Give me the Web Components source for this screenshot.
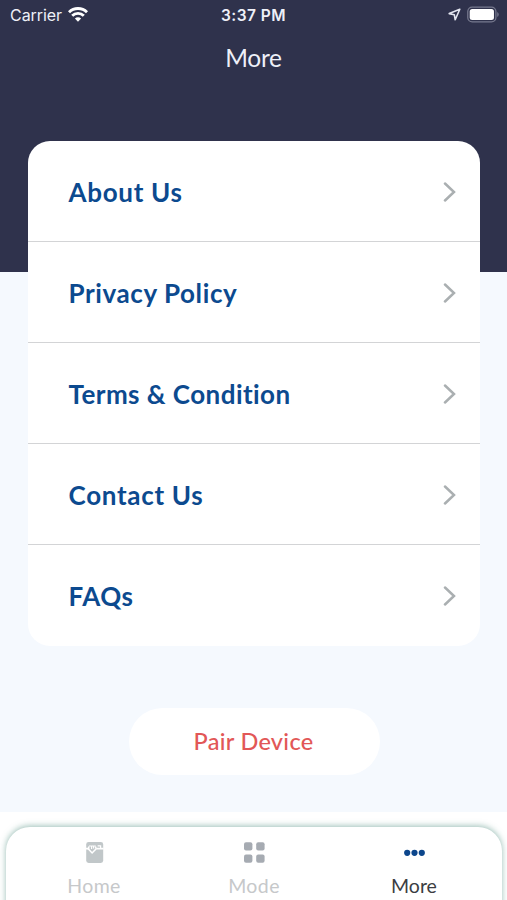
<!DOCTYPE html>
<html lang="en">
<head>
<meta charset="UTF-8">
<meta name="viewport" content="width=device-width, initial-scale=1.0">
<title>More</title>
<style>
  body {
    margin: 0;
    height: 900px;
    overflow: hidden;
    font-family: Lato, "Noto Sans", sans-serif;
  }
</style>
</head>
<body>
<more-screen></more-screen>

<script>
class StatusBar extends HTMLElement {
  connectedCallback() {
    this.attachShadow({ mode: 'open' });
    this.shadowRoot.innerHTML = `
      <style>
        :host {
          display: grid;
          grid-template-columns: 1fr auto 1fr;
          align-items: center;
          height: 29px;
          padding: 0 8px 0 10px;
          color: #eef0f8;
          font-family: Inter, "Liberation Sans", sans-serif;
          font-size: 16px;
        }

        .left, .right {
          display: flex;
          align-items: center;
        }

        .left { gap: 6px; }
        .right { gap: 6px; justify-content: flex-end; }
        .carrier { letter-spacing: -0.05px; }

        .time {
          padding-top: 1px;
          font-weight: 600;
          font-size: 15.5px;
          letter-spacing: 0.45px;
          margin-left: -2px;
        }

        svg { display: block; }
      </style>

      <div class="left">
        <span class="carrier">Carrier</span>
        <svg width="20" height="15" viewBox="0 0 20 15" fill="none" stroke="#fff" stroke-width="2.9">
          <path d="M1 5.2a12.8 12.8 0 0 1 18 0"></path>
          <path d="M4.2 8.8a8.2 8.2 0 0 1 11.6 0"></path>
          <path d="M10 14.8L6.9 11.6a4.4 4.4 0 0 1 6.2 0z" fill="#fff" stroke="none"></path>
        </svg>
      </div>
      <span class="time">3:37 PM</span>
      <div class="right">
        <svg width="13" height="13" viewBox="0 0 13 13" fill="none" stroke="#e4e6f0" stroke-width="1.6" stroke-linejoin="round">
          <path d="M11.8 1.2L1.2 5.6l5.1 1.1.9 5.1z"></path>
        </svg>
        <svg width="32" height="17" viewBox="0 0 33 17">
          <rect x="0.8" y="0.8" width="29" height="15.4" rx="4.6" fill="none" stroke="#77798e" stroke-width="1.3"></rect>
          <rect x="2.8" y="2.8" width="25" height="11.4" rx="2.6" fill="#fff"></rect>
          <path d="M31.2 6v5q1.5-.7 1.5-2.5T31.2 6z" fill="#77798e"></path>
        </svg>
      </div>
    `;
  }
}

class MenuItem extends HTMLElement {
  connectedCallback() {
    this.attachShadow({ mode: 'open' });
    this.shadowRoot.innerHTML = `
      <style>
        :host {
          display: flex;
          align-items: center;
          justify-content: space-between;
          box-sizing: border-box;
          height: 101.1px;
          padding: 2px 24px 0 40.5px;
          color: #0c4a8f;
          font-size: 26px;
          font-weight: 700;
          letter-spacing: var(--tracking, 0.5px);
          white-space: nowrap;
          border-bottom: 1.5px solid #d3d4d6;
        }

        :host(:last-child) {
          border-bottom: 0;
          padding-top: 0;
        }

        svg { display: block; }
      </style>

      <slot></slot>
      <svg width="13" height="20" viewBox="0 0 13 20" fill="none" stroke="#aaafb1" stroke-width="2.5" stroke-linecap="round">
        <path d="M2 1.5L11 10L2 18.5"></path>
      </svg>
    `;
  }
}

class MenuCard extends HTMLElement {
  connectedCallback() {
    this.attachShadow({ mode: 'open' });
    this.shadowRoot.innerHTML = `
      <style>
        :host {
          display: block;
          box-sizing: border-box;
          height: 505px;
          margin: 0 27px 0 28px;
          border-radius: 22px;
          background: #fff;
          overflow: hidden;
        }
      </style>
      <slot></slot>
    `;
  }
}

class PairButton extends HTMLElement {
  connectedCallback() {
    this.attachShadow({ mode: 'open' });
    this.shadowRoot.innerHTML = `
      <style>
        :host {
          display: flex;
          justify-content: center;
          align-items: flex-start;
        }

        button {
          width: 251px;
          height: 67px;
          margin-left: 2px;
          padding: 0 2px 2px 0;
          border: 0;
          border-radius: 34px;
          background: #fff;
          color: #e25757;
          font: 500 23.5px Lato, "Noto Sans", sans-serif;
          letter-spacing: 0.3px;
        }
      </style>
      <button><slot></slot></button>
    `;
  }
}

const TAB_ICONS = {
  home: `
    <rect x="3.2" y="1" width="17" height="21" rx="2.4" fill="#c1c7c9"></rect>
    <path d="M3 7.6h3.4M13.6 7.6h7" fill="none" stroke="#fff" stroke-width="1.8"></path>
    <path d="M6 5.4l-.8 2.4 3.9 4.2 4.1-4.2-.8-2.4" fill="none" stroke="#fff" stroke-width="1.5"></path>
    <path d="M6 5h6.8M8.6 5v3M10.6 5v2.6M14.6 4.8h3v2.6" fill="none" stroke="#fff" stroke-width="1.2"></path>
  `,
  mode: `
    <g fill="#a6abb2">
      <rect x="1" y="1.2" width="8.4" height="8.4" rx="2"></rect>
      <rect x="13.2" y="1.2" width="8.4" height="8.4" rx="2"></rect>
      <rect x="1" y="13.4" width="8.4" height="8.4" rx="2"></rect>
      <rect x="13.2" y="13.4" width="8.4" height="8.4" rx="2"></rect>
    </g>
  `,
  more: `
    <g fill="#0c468c">
      <circle cx="4.2" cy="11.8" r="3.1"></circle>
      <circle cx="11.5" cy="11.8" r="3.1"></circle>
      <circle cx="18.8" cy="11.8" r="3.1"></circle>
    </g>
  `
};

class TabItem extends HTMLElement {
  connectedCallback() {
    this.attachShadow({ mode: 'open' });
    this.shadowRoot.innerHTML = `
      <style>
        :host {
          display: flex;
          flex-direction: column;
          align-items: center;
          gap: 10px;
          color: #c6c8ca;
          font-size: 19.5px;
          line-height: 24px;
          letter-spacing: 0.4px;
        }

        :host([active]) {
          color: #3b3d42;
          letter-spacing: 0;
        }

        svg { display: block; }
      </style>
      <svg width="23" height="23" viewBox="0 0 23 23">${TAB_ICONS[this.getAttribute('icon')]}</svg>
      <span><slot></slot></span>
    `;
  }
}

class TabBar extends HTMLElement {
  connectedCallback() {
    this.attachShadow({ mode: 'open' });
    this.shadowRoot.innerHTML = `
      <style>
        :host {
          display: block;
          box-sizing: border-box;
          height: 88px;
          padding: 14.5px 5px 0 6px;
          background: #fff;
          overflow: hidden;
        }

        nav {
          display: grid;
          grid-template-columns: 160px 160px 160px;
          justify-content: center;
          box-sizing: border-box;
          height: 90px;
          padding-top: 14px;
          border-radius: 24px 24px 0 0;
          background: #fff;
          box-shadow: 0 -1px 6px rgba(70, 135, 120, 0.55);
        }
      </style>
      <nav><slot></slot></nav>
    `;
  }
}

class MoreScreen extends HTMLElement {
  connectedCallback() {
    this.attachShadow({ mode: 'open' });
    this.shadowRoot.innerHTML = `
      <style>
        :host {
          display: flex;
          flex-direction: column;
          height: 900px;
          background: linear-gradient(#2f324c 272px, #f5f9fe 272px);
        }

        h1 {
          margin: 0;
          height: 112px;
          padding-top: 14px;
          box-sizing: border-box;
          color: #eef0f8;
          font-size: 24.5px;
          font-weight: 400;
          line-height: 30px;
          letter-spacing: -0.3px;
          text-align: center;
        }

        pair-button { margin-top: 62px; flex: 1; }
      </style>

      <status-bar></status-bar>
      <h1>More</h1>
      <menu-card>
        <menu-item style="--tracking: 0.7px">About Us</menu-item>
        <menu-item style="--tracking: 0.6px">Privacy Policy</menu-item>
        <menu-item style="--tracking: 0.45px">Terms &amp; Condition</menu-item>
        <menu-item style="--tracking: 0.7px">Contact Us</menu-item>
        <menu-item style="--tracking: 0.5px">FAQs</menu-item>
      </menu-card>
      <pair-button>Pair Device</pair-button>
      <tab-bar>
        <tab-item icon="home">Home</tab-item>
        <tab-item icon="mode">Mode</tab-item>
        <tab-item icon="more" active>More</tab-item>
      </tab-bar>
    `;
  }
}

customElements.define('status-bar', StatusBar);
customElements.define('menu-item', MenuItem);
customElements.define('menu-card', MenuCard);
customElements.define('pair-button', PairButton);
customElements.define('tab-item', TabItem);
customElements.define('tab-bar', TabBar);
customElements.define('more-screen', MoreScreen);
</script>
</body>
</html>
